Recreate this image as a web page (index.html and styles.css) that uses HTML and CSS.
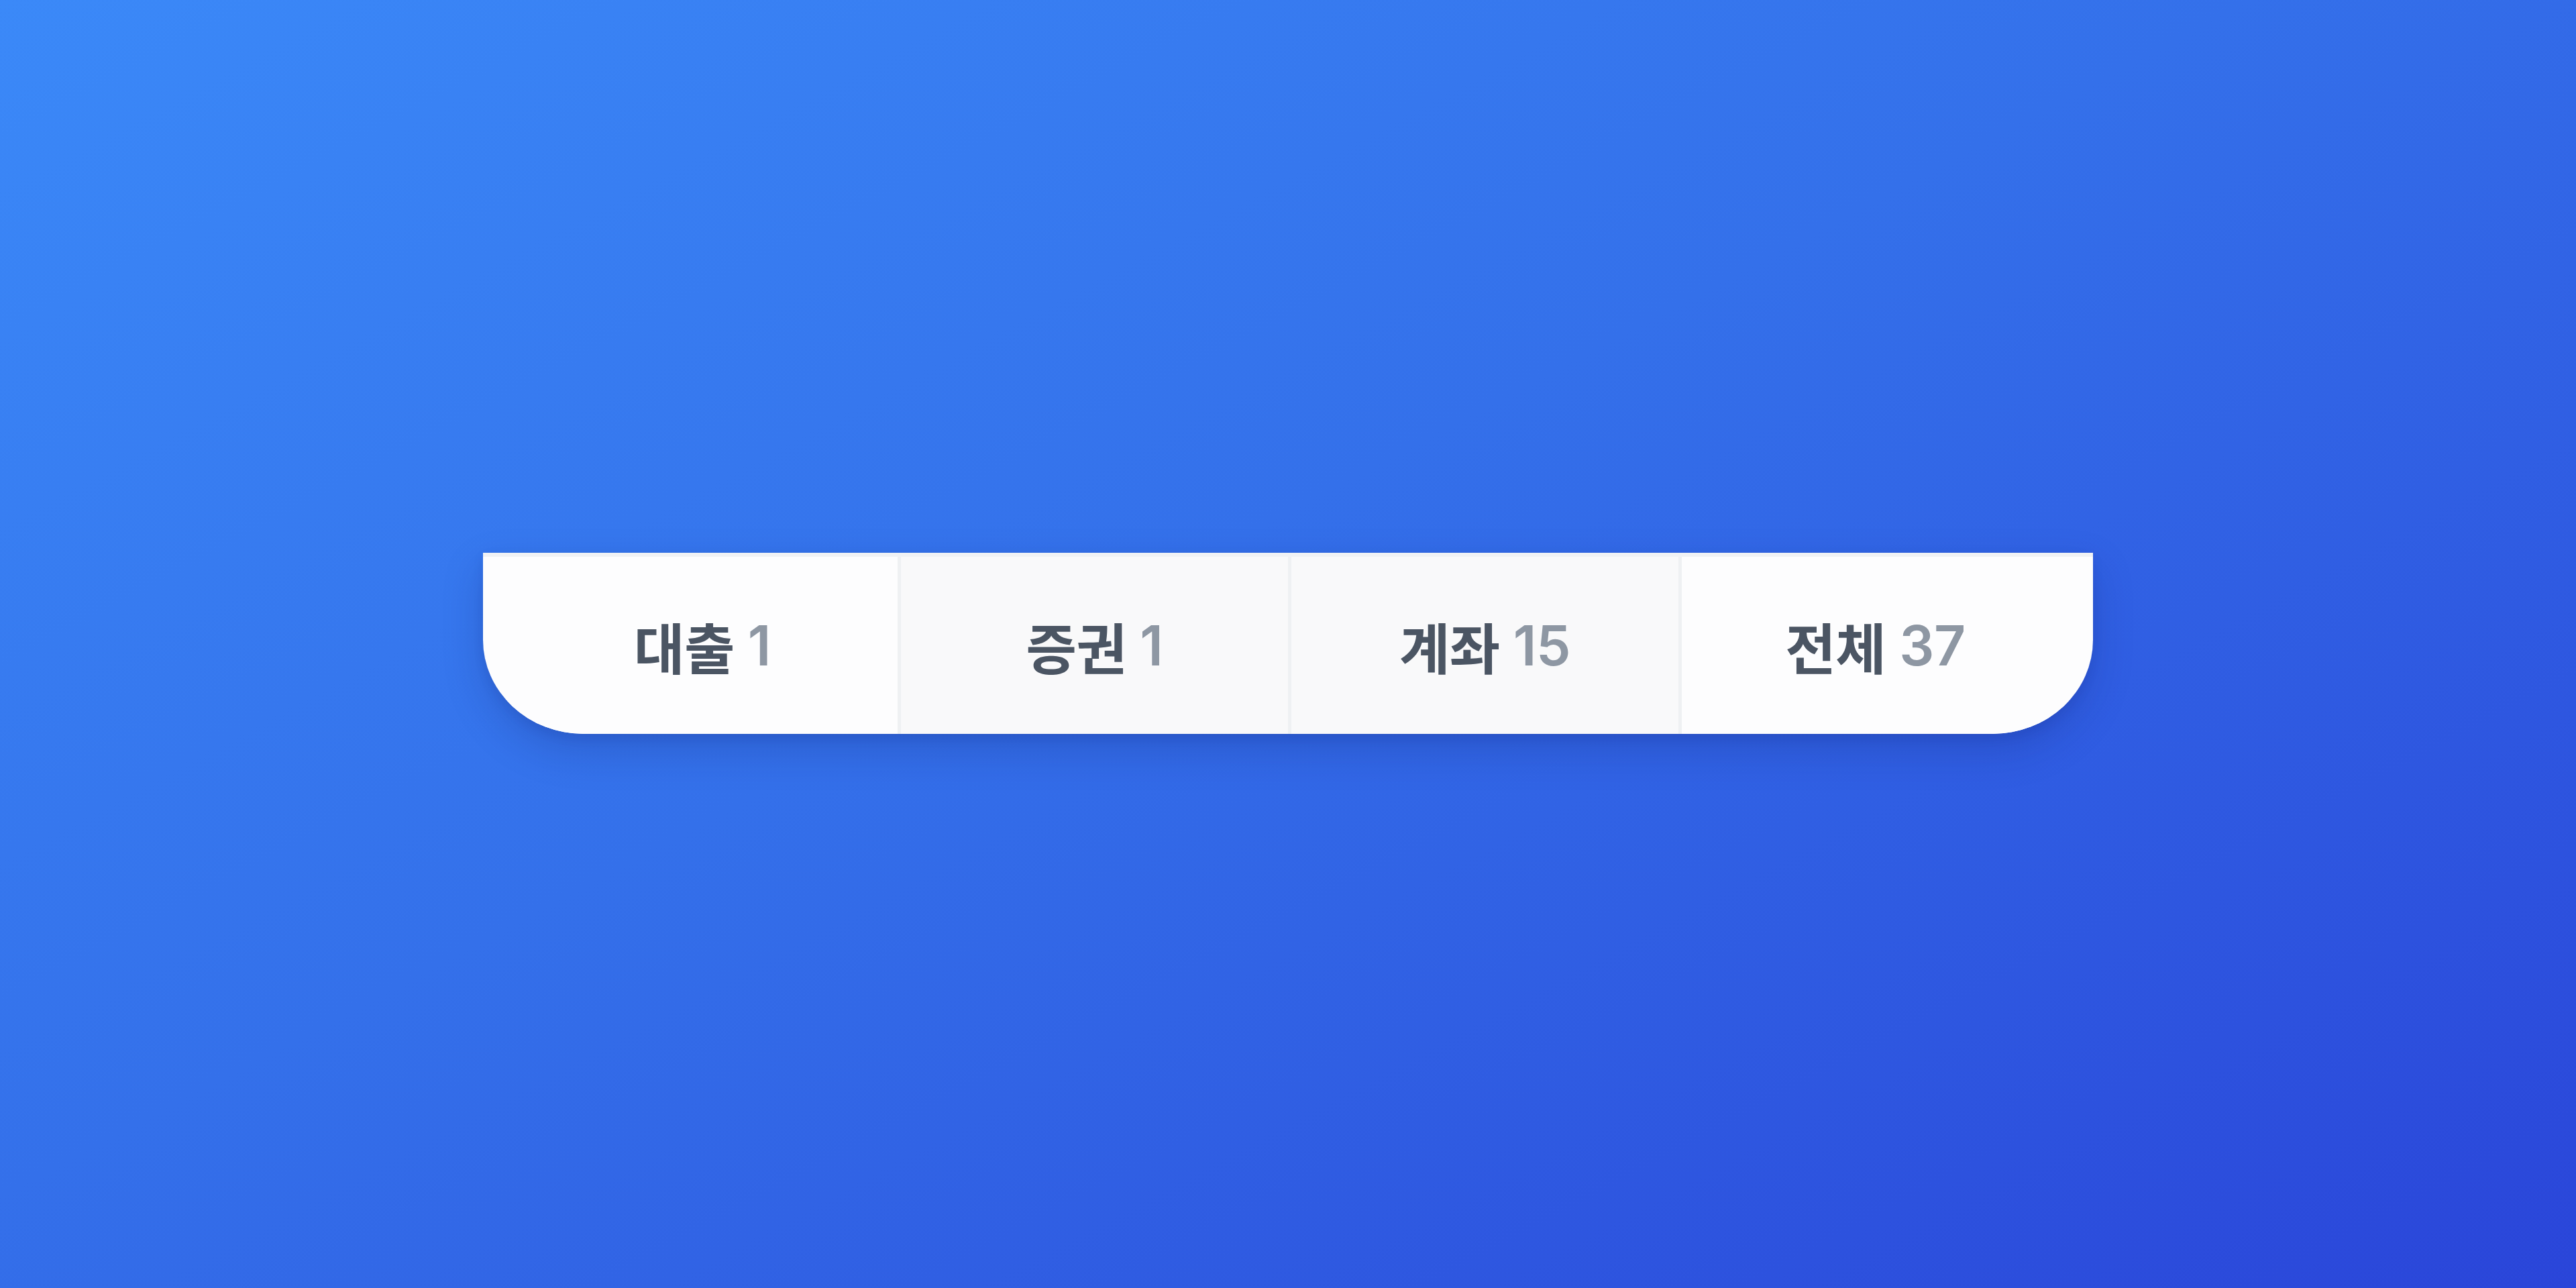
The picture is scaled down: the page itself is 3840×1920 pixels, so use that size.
FILE: index.html
```html
<!DOCTYPE html>
<html lang="ko">
<head>
<meta charset="utf-8">
<title>Tabs</title>
<link rel="stylesheet" href="styles.css">
</head>
<body>
<main class="stage">
  <nav class="tabbar">
    <div class="tab tab-edge"><span class="label">대출</span><span class="count">1</span></div>
    <div class="tab tab-mid"><span class="label">증권</span><span class="count">1</span></div>
    <div class="tab tab-mid"><span class="label">계좌</span><span class="count">15</span></div>
    <div class="tab tab-edge"><span class="label">전체</span><span class="count">37</span></div>
  </nav>
</main>
</body>
</html>
```
FILE: styles.css
```css
html, body {
  margin: 0;
  padding: 0;
}
body {
  width: 3840px;
  height: 1920px;
  background: linear-gradient(152deg, #3b89f8 0%, #3470ea 45%, #2a45d9 100%);
  font-family: "Inter", "Noto Sans CJK KR", sans-serif;
}
.stage {
  width: 100%;
  height: 100%;
  display: flex;
  align-items: center;
  justify-content: center;
}
.tabbar {
  box-sizing: border-box;
  width: 2400px;
  height: 270px;
  margin-top: -2px;
  padding: 0 36px;
  display: grid;
  grid-template-columns: repeat(4, 1fr);
  background: #fdfdfe;
  border-top: 6px solid #f0f2f5;
  border-radius: 0 0 150px 150px / 0 0 140px 140px;
  overflow: hidden;
  box-shadow: 0 24px 60px rgba(16, 32, 110, 0.22), 0 6px 16px rgba(16, 32, 110, 0.10);
}
.tab {
  display: flex;
  align-items: center;
  justify-content: center;
  font-size: 82px;
  font-weight: 600;
  letter-spacing: -0.5px;
}
.tab + .tab {
  border-left: 5px solid #eff1f3;
}
.tab-edge {
  background: #fdfdfe;
}
.tab-mid {
  background: #f9f9fa;
}
.label {
  color: #4b5563;
}
.count {
  color: #8e97a3;
  margin-left: 20px;
}
```
